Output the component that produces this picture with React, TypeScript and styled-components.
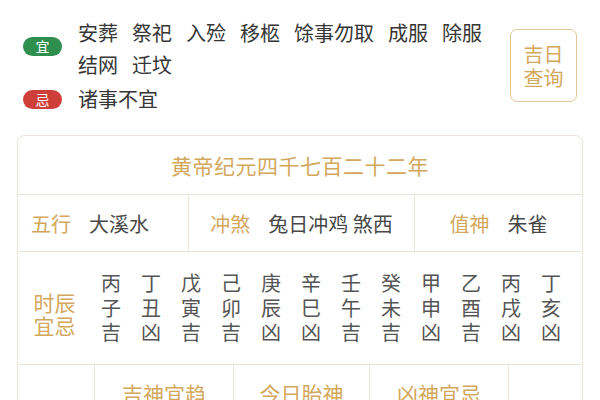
import React from "react";
import styled, { createGlobalStyle } from "styled-components";

const GlobalStyle = createGlobalStyle`
  html, body {
    margin: 0;
    padding: 0;
    background: #ffffff;
  }
  body {
    font-family: "Noto Sans CJK SC", "Noto Sans", sans-serif;
  }
`;

const gold = "#d3a85c";
const line = "#ece4d6";

const Page = styled.div`
  width: 600px;
  height: 400px;
  overflow: hidden;
  box-sizing: border-box;
  padding: 17px 17px 0;
`;

// 宜忌 + 吉日查询
const Top = styled.div`
  display: flex;
  align-items: flex-start;
`;

const Lists = styled.div`
  flex: 1;
  display: flex;
  flex-direction: column;
  gap: 2px;
`;

const ListRow = styled.div`
  display: flex;
  align-items: center;
`;

const Badge = styled.span<{ $tone: "good" | "bad" }>`
  flex: none;
  width: 39px;
  height: 19px;
  margin-left: 6px;
  margin-right: 16px;
  margin-top: ${(p) => (p.$tone === "good" ? "-6px" : "0")};
  border-radius: 10px;
  background: ${(p) => (p.$tone === "good" ? "#2f8f4e" : "#cf3f3a")};
  color: #fff;
  font-size: 14px;
  line-height: 19px;
  text-align: center;
`;

const Items = styled.div`
  width: 418px;
  display: flex;
  flex-wrap: wrap;
  column-gap: 14px;
  font-size: 20px;
  line-height: 32px;
  color: #363636;
`;

const QueryButton = styled.div`
  flex: none;
  margin-top: 12px;
  margin-right: 6px;
  width: 67px;
  height: 73px;
  box-sizing: border-box;
  border: 1.5px solid #e0c692;
  border-radius: 7px;
  color: ${gold};
  font-size: 20px;
  line-height: 24px;
  display: flex;
  flex-direction: column;
  align-items: center;
  justify-content: center;
`;

// 黄历表格
const Card = styled.div`
  margin-top: 20px;
  border: 1px solid ${line};
  border-radius: 8px;
`;

const Era = styled.div`
  height: 58px;
  display: flex;
  align-items: center;
  justify-content: center;
  color: ${gold};
  font-size: 21px;
  letter-spacing: 0.5px;
  border-bottom: 1px solid ${line};
`;

const InfoRow = styled.div`
  display: grid;
  grid-template-columns: 170px 226px 1fr;
  height: 56px;
  border-bottom: 1px solid ${line};
`;

const InfoCell = styled.div<{ $start?: boolean }>`
  display: flex;
  align-items: center;
  justify-content: ${(p) => (p.$start ? "flex-start" : "center")};
  padding-left: ${(p) => (p.$start ? "13px" : "0")};
  gap: 18px;
  font-size: 20px;
  border-left: 1px solid ${line};
  &:first-child {
    border-left: none;
  }
`;

const Label = styled.span`
  color: ${gold};
`;

const Value = styled.span`
  color: #484848;
`;

const HoursRow = styled.div`
  display: grid;
  grid-template-columns: 73px repeat(12, 40px);
  height: 112px;
  border-bottom: 1px solid ${line};
`;

const HoursLabel = styled.div`
  display: flex;
  flex-direction: column;
  align-items: center;
  justify-content: center;
  padding-top: 12px;
  color: ${gold};
  font-size: 21px;
  line-height: 23px;
`;

const HourCol = styled.div`
  display: flex;
  flex-direction: column;
  align-items: center;
  justify-content: center;
  color: #555;
  font-size: 20px;
  line-height: 24.5px;
`;

const GodsRow = styled.div`
  display: grid;
  grid-template-columns: 76px 139px 136px 139px 1fr;
  height: 56px;
`;

const GodCell = styled.div`
  display: flex;
  align-items: center;
  justify-content: center;
  color: ${gold};
  font-size: 21px;
  border-left: 1px solid ${line};
  &:first-child {
    border-left: none;
  }
`;

const goodList = ["安葬", "祭祀", "入殓", "移柩", "馀事勿取", "成服", "除服", "结网", "迁坟"];

const hours = [
  ["丙", "子", "吉"],
  ["丁", "丑", "凶"],
  ["戊", "寅", "吉"],
  ["己", "卯", "吉"],
  ["庚", "辰", "凶"],
  ["辛", "巳", "凶"],
  ["壬", "午", "吉"],
  ["癸", "未", "吉"],
  ["甲", "申", "凶"],
  ["乙", "酉", "吉"],
  ["丙", "戌", "凶"],
  ["丁", "亥", "凶"],
];

const App = () => {
  return (
    <Page>
      <GlobalStyle />
      <Top>
        <Lists>
          <ListRow>
            <Badge $tone="good">宜</Badge>
            <Items>
              {goodList.map((t, i) => (
                <span key={i}>{t}</span>
              ))}
            </Items>
          </ListRow>
          <ListRow>
            <Badge $tone="bad">忌</Badge>
            <Items>
              <span>诸事不宜</span>
            </Items>
          </ListRow>
        </Lists>
        <QueryButton>
          <span>吉日</span>
          <span>查询</span>
        </QueryButton>
      </Top>

      <Card>
        <Era>黄帝纪元四千七百二十二年</Era>
        <InfoRow>
          <InfoCell $start>
            <Label>五行</Label>
            <Value>大溪水</Value>
          </InfoCell>
          <InfoCell>
            <Label>冲煞</Label>
            <Value>兔日冲鸡 煞西</Value>
          </InfoCell>
          <InfoCell>
            <Label>值神</Label>
            <Value>朱雀</Value>
          </InfoCell>
        </InfoRow>
        <HoursRow>
          <HoursLabel>
            <span>时辰</span>
            <span>宜忌</span>
          </HoursLabel>
          {hours.map((h, i) => (
            <HourCol key={i}>
              {h.map((c, j) => (
                <span key={j}>{c}</span>
              ))}
            </HourCol>
          ))}
        </HoursRow>
        <GodsRow>
          <GodCell />
          <GodCell>吉神宜趋</GodCell>
          <GodCell>今日胎神</GodCell>
          <GodCell>凶神宜忌</GodCell>
          <GodCell />
        </GodsRow>
      </Card>
    </Page>
  );
};

export default App;
